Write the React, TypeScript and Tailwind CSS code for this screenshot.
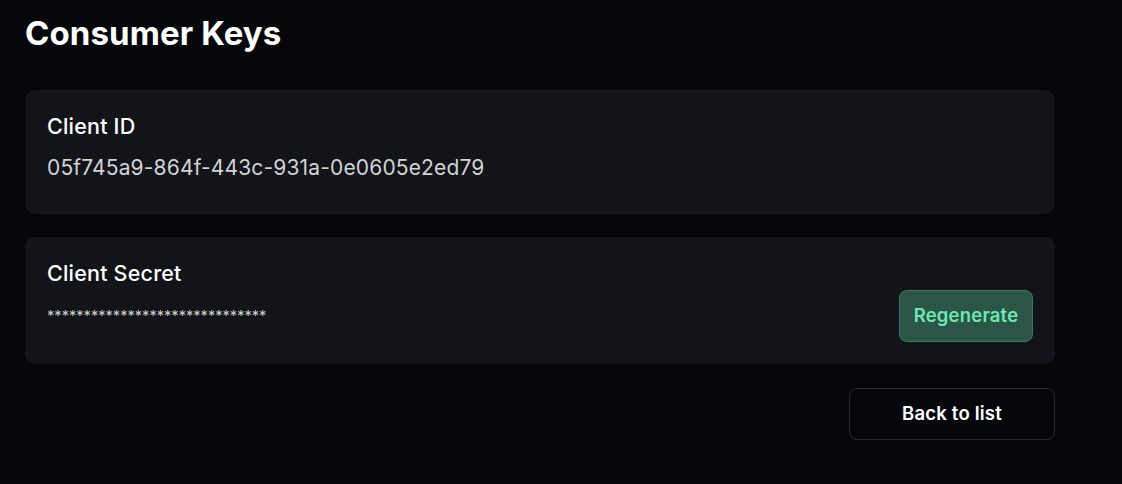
import React from "react";

export default function App() {
  return (
    <div
      className="min-h-[484px] w-full bg-[#06070b] text-white"
      style={{ fontFamily: "Inter, 'Noto Sans', sans-serif" }}
    >
      <div className="w-[1030px] pl-[25px] pt-[13px] box-content">
        <h1 className="text-[33px] font-bold leading-[40px] tracking-[0.1px]">Consumer Keys</h1>
        <div className="mt-[37px] rounded-[10px] bg-[#131419] px-[22px] pt-[21px] pb-[32px]">
          <div className="text-[21.5px] font-medium leading-[30px] tracking-[0.2px]">Client ID</div>
          <div className="mt-[13px] text-[21px] leading-[28px] tracking-[0.15px] text-[#d2d3d6]">
            05f745a9-864f-443c-931a-0e0605e2ed79
          </div>
        </div>
        <div className="mt-[23px] rounded-[10px] bg-[#131419] px-[22px] pt-[21px] pb-[22px]">
          <div className="text-[21.5px] font-medium leading-[30px] tracking-[0.2px]">Client Secret</div>
          <div className="mt-[2px] flex items-center justify-between">
            <div className="text-[14.5px] leading-[20px] tracking-[0.05px] text-[#c8c9cc]">
              ******************************
            </div>
            <button className="h-[52px] w-[134px] rounded-[8px] border border-[#3d7a62] bg-[#2b5546] text-[18.5px] font-semibold tracking-[0.2px] text-[#6de8b4]">
              Regenerate
            </button>
          </div>
        </div>
        <div className="mt-[24px] flex justify-end">
          <button className="h-[52px] w-[206px] rounded-[8px] border border-[#2a2b31] bg-[#06070b] text-[18.5px] font-semibold tracking-[0.2px] text-white">
            Back to list
          </button>
        </div>
      </div>
    </div>
  );
}
